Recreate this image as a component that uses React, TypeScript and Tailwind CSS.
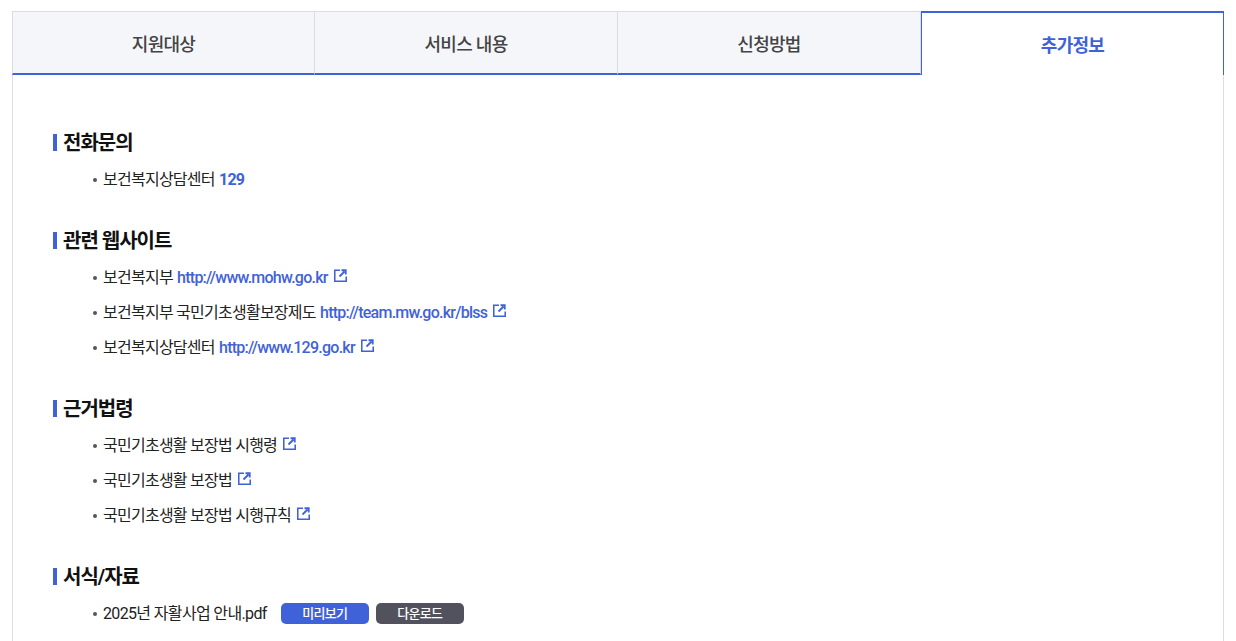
import React from "react";

const TABS = ["지원대상", "서비스 내용", "신청방법", "추가정보"];

const ExternalIcon = () => (
  <svg width="13" height="13" viewBox="0 0 13 13" fill="none" className="ml-[6px] inline-block align-[1px]">
    <path d="M6 1.25H0.75V12.25H12.25V7.5" stroke="#3f62d8" strokeWidth="1.6" />
    <path d="M5.5 7.5L10.5 2.5M7.5 1.25H11.75V5.5" stroke="#3f62d8" strokeWidth="1.8" />
  </svg>
);

const Item = ({ children }: { children: React.ReactNode }) => (
  <li className="relative h-[35px] pl-[50px] text-[16px] leading-[33px] tracking-[-0.75px] text-[#222]">
    <span className="absolute left-[40px] top-[15px] h-[4px] w-[4px] rounded-full bg-[#555]" />
    {children}
  </li>
);

const Link = ({ children }: { children: React.ReactNode }) => (
  <span className="ml-[1px] font-medium text-[#3f62d8]">{children}</span>
);

const Section = ({ title, children }: { title: string; children: React.ReactNode }) => (
  <section className="mb-[27px]">
    <h3 className="mb-[4px] flex h-[32px] items-center text-[20px] font-bold tracking-[-1px] text-[#111]">
      <span className="mr-[6px] -mt-[2px] h-[17px] w-[4px] bg-[#3f62d8]" />
      {title}
    </h3>
    <ul>{children}</ul>
  </section>
);

export default function App() {
  return (
    <div className="h-[641px] overflow-hidden bg-white px-[12px] pt-[11px] font-['Roboto','Noto_Sans_CJK_KR',sans-serif]">
      <div className="flex h-[64px]">
        {TABS.map((tab, i) =>
          i === 3 ? (
            <div
              key={tab}
              className="flex w-[303px] items-center justify-center border-x border-t-2 border-[#3f62d8] bg-white pt-[3px] text-[18px] font-bold tracking-[-0.7px] text-[#3f62d8]"
            >
              {tab}
            </div>
          ) : (
            <div
              key={tab}
              className={`flex w-[303px] items-center justify-center border-t border-r border-b-2 border-t-[#dddddd] border-r-[#dddddd] border-b-[#3f62d8] bg-[#f5f6fa] pt-[3px] text-[18px] font-medium tracking-[-0.7px] text-[#444] ${i === 0 ? "border-l border-l-[#dddddd]" : ""}`}
            >
              {tab}
            </div>
          )
        )}
      </div>
      <div className="h-[600px] border-x border-[#dddddd] px-[40px] pt-[52px]">
        <Section title="전화문의">
          <Item>
            보건복지상담센터{" "}
            <span className="ml-[1px] font-bold text-[#3f62d8]">129</span>
          </Item>
        </Section>
        <Section title="관련 웹사이트">
          <Item>
            보건복지부 <Link>http://www.mohw.go.kr</Link>
            <ExternalIcon />
          </Item>
          <Item>
            보건복지부 국민기초생활보장제도 <Link>http://team.mw.go.kr/blss</Link>
            <ExternalIcon />
          </Item>
          <Item>
            보건복지상담센터 <Link>http://www.129.go.kr</Link>
            <ExternalIcon />
          </Item>
        </Section>
        <Section title="근거법령">
          <Item>
            국민기초생활 보장법 시행령
            <ExternalIcon />
          </Item>
          <Item>
            국민기초생활 보장법
            <ExternalIcon />
          </Item>
          <Item>
            국민기초생활 보장법 시행규칙
            <ExternalIcon />
          </Item>
        </Section>
        <Section title="서식/자료">
          <Item>
            <span className="flex items-center tracking-[-0.65px]">
              2025년 자활사업 안내.pdf
              <span className="ml-[14px] flex h-[21px] w-[88px] items-center justify-center rounded-[5px] bg-[#3f62d8] text-[13px] font-medium tracking-[-0.75px] text-white">
                미리보기
              </span>
              <span className="ml-[7px] flex h-[21px] w-[88px] items-center justify-center rounded-[5px] bg-[#52525e] text-[13px] font-medium tracking-[-0.75px] text-white">
                다운로드
              </span>
            </span>
          </Item>
        </Section>
      </div>
    </div>
  );
}
